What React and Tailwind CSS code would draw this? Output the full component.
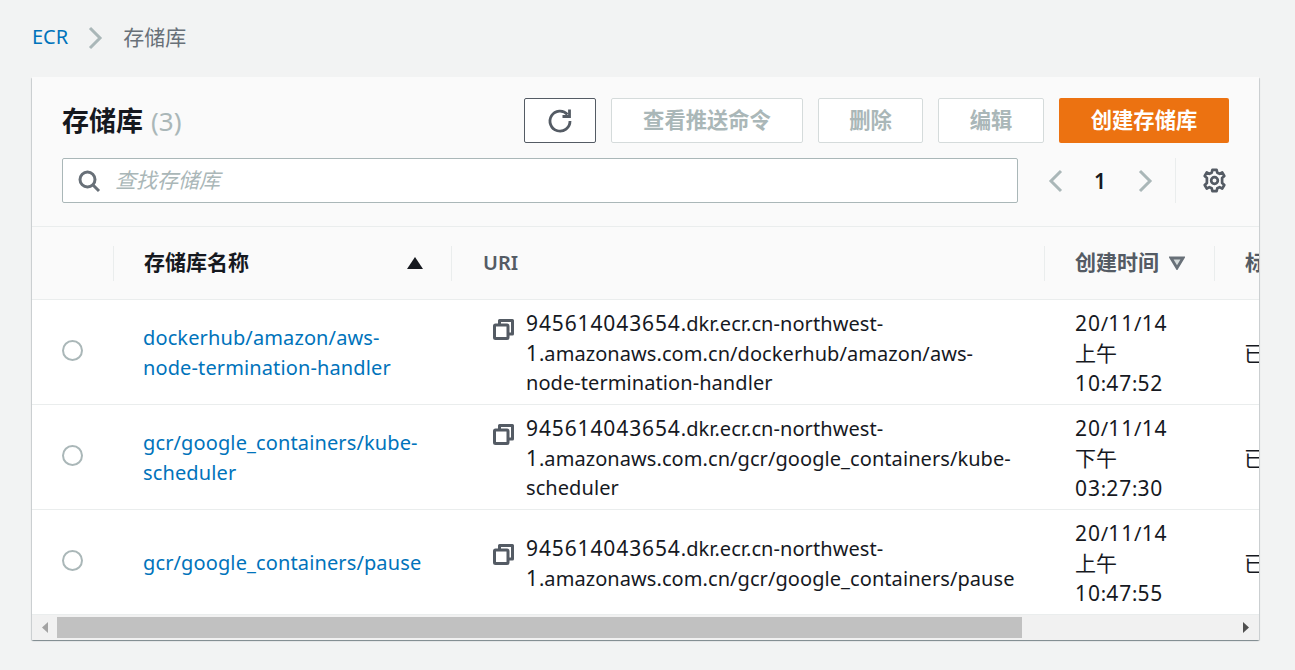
import React from "react";

const FONT = "font-['Noto_Sans','Noto_Sans_CJK_SC',sans-serif]";

const Refresh = () => (
  <svg width="26" height="26" viewBox="0 0 26 26" fill="none" stroke="#545b64" strokeWidth="2.8">
    <path d="M20.5 6.5 A10 10 0 1 0 23 13" />
    <path d="M22.5 1.5 V8.5 H15.5" />
  </svg>
);

const Search = () => (
  <svg width="24" height="24" viewBox="0 0 24 24" fill="none" stroke="#687078" strokeWidth="3">
    <circle cx="10.5" cy="10.5" r="7.5" />
    <path d="M16 16 L22 22" />
  </svg>
);

const Chevron = ({ dir, color = "#aab7b8", w = 16, h = 24 }) => (
  <svg width={w} height={h} viewBox="0 0 16 24" fill="none" stroke={color} strokeWidth="3">
    {dir === "left" ? <path d="M13 2 L3 12 L13 22" /> : <path d="M3 2 L13 12 L3 22" />}
  </svg>
);

const Gear = () => (
  <svg width="25" height="25" viewBox="0 0 24 24" fill="none" stroke="#545b64" strokeWidth="2.6" strokeLinejoin="round">
    <circle cx="12" cy="12" r="3.2" />
    <path d="M10 1.8 H14 L14.7 4.6 L16.9 5.6 L19.4 4.2 L21.4 7.7 L19.3 9.6 V14.4 L21.4 16.3 L19.4 19.8 L16.9 18.4 L14.7 19.4 L14 22.2 H10 L9.3 19.4 L7.1 18.4 L4.6 19.8 L2.6 16.3 L4.7 14.4 V9.6 L2.6 7.7 L4.6 4.2 L7.1 5.6 L9.3 4.6 Z" />
  </svg>
);

const Copy = () => (
  <svg width="21" height="21" viewBox="0 0 21 21" fill="none" stroke="#545b64" strokeWidth="3" strokeLinejoin="round">
    <rect x="1.5" y="6" width="13.5" height="13.5" rx="1" />
    <path d="M6.5 6 V1.5 H19.5 V15 H15" />
  </svg>
);

const rows = [
  {
    name: ["dockerhub/amazon/aws-", "node-termination-handler"],
    uri: ["945614043654.dkr.ecr.cn-northwest-", "1.amazonaws.com.cn/dockerhub/amazon/aws-", "node-termination-handler"],
    time: ["20/11/14", "上午", "10:47:52"],
  },
  {
    name: ["gcr/google_containers/kube-", "scheduler"],
    uri: ["945614043654.dkr.ecr.cn-northwest-", "1.amazonaws.com.cn/gcr/google_containers/kube-", "scheduler"],
    time: ["20/11/14", "下午", "03:27:30"],
  },
  {
    name: ["gcr/google_containers/pause"],
    uri: ["945614043654.dkr.ecr.cn-northwest-", "1.amazonaws.com.cn/gcr/google_containers/pause"],
    time: ["20/11/14", "上午", "10:47:55"],
  },
];

const DisabledBtn = ({ w, children }) => (
  <div className={`${w} h-[45px] flex items-center justify-center rounded-[2px] border border-[#d5dbdb] bg-white pb-[2px] text-[21.3px] font-bold text-[#aab7b8]`}>
    {children}
  </div>
);

// The reference's digits and CJK glyphs run a little wider than Noto Sans at the Latin size.
const Run = ({ text }) =>
  text.split(/(\d+|[\u4e00-\u9fff]+)/).map((part, i) =>
    i % 2 === 1 ? (
      <span key={i} className={/\d/.test(part) ? "text-[21px] tracking-[0.88px]" : "text-[21px]"}>{part}</span>
    ) : (
      part
    )
  );

const Lines = ({ items, tracking = "tracking-[0.07px]" }) =>
  items.map((l) => (
    <div key={l} className={`h-[30px] whitespace-nowrap ${tracking}`}><Run text={l} /></div>
  ));

export default function App() {
  return (
    <div className={`${FONT} w-[1295px] h-[670px] overflow-hidden bg-[#f2f3f3] pl-[32px] pt-[23px] text-[20px] leading-[30px] text-[#16191f]`}>
      <div className="mb-[24px] flex h-[30px] items-center">
        <span className="pb-[2px] text-[#0073bb]">ECR</span>
        <span className="ml-[19px] mr-[20px] flex"><Chevron dir="right" /></span>
        <span className="pb-[2px] text-[21px] text-[#687078]">存储库</span>
      </div>

      <div className="h-[563px] w-[1227px] overflow-hidden rounded-[1px] bg-white shadow-[0_1px_1px_0_rgba(0,28,36,0.3),1px_1px_1px_0_rgba(0,28,36,0.15),-1px_1px_1px_0_rgba(0,28,36,0.15)]">
        <div className="h-[150px] border-b border-[#eaeded] bg-[#fafafa] pl-[30px] pr-[30px] pt-[21px]">
          <div className="flex h-[45px] items-center justify-between">
            <div className="flex items-center text-[27px] font-bold">
              存储库
              <span className="ml-[8px] text-[26px] font-normal text-[#aab7b8]">(3)</span>
            </div>
            <div className="flex gap-[15px]">
              <div className="flex h-[45px] w-[72px] items-center justify-center rounded-[2px] border border-[#545b64] bg-white"><Refresh /></div>
              <DisabledBtn w="w-[192px]">查看推送命令</DisabledBtn>
              <DisabledBtn w="w-[105px]">删除</DisabledBtn>
              <DisabledBtn w="w-[106px]">编辑</DisabledBtn>
              <div className="flex h-[45px] w-[170px] items-center justify-center rounded-[2px] bg-[#ec7211] pb-[2px] text-[21.3px] font-bold text-white">创建存储库</div>
            </div>
          </div>
          <div className="mt-[15px] flex h-[45px]">
            <div className="flex h-[45px] w-[956px] items-center rounded-[2px] border border-[#aab7b8] bg-white pl-[14px]">
              <Search />
              <span className="ml-[14px] pb-[2px] text-[21px] italic text-[#aab7b8]">查找存储库</span>
            </div>
            <div className="ml-[30px] flex h-[45px] items-center">
              <Chevron dir="left" />
              <span className="ml-[30px] w-[12px] text-center text-[21px] font-semibold">1</span>
              <span className="ml-[31px] flex"><Chevron dir="right" /></span>
              <div className="ml-[22px] h-[45px] w-px bg-[#eaeded]" />
              <span className="ml-[26px] flex"><Gear /></span>
            </div>
          </div>
        </div>

        <div className="flex h-[73px] items-center overflow-hidden border-b border-[#eaeded] bg-[#fafafa] font-semibold">
          <div className="h-[35px] w-[82px] shrink-0 border-r border-[#eaeded]" />
          <div className="flex h-[35px] w-[338px] shrink-0 items-center justify-between border-r border-[#eaeded] pl-[30px] pr-[28px]">
            <span className="pb-[2px] text-[21px]">存储库名称</span>
            <svg width="16" height="14" viewBox="0 0 16 14" fill="#16191f"><path d="M8 1 L16 13 H0 Z" /></svg>
          </div>
          <div className="flex h-[35px] w-[593px] shrink-0 items-center border-r border-[#eaeded] pl-[31px] text-[#545b64]">URI</div>
          <div className="flex h-[35px] w-[170px] shrink-0 items-center border-r border-[#eaeded] pl-[30px] text-[21px] text-[#545b64]">
            <span className="pb-[2px]">创建时间</span>
            <svg className="ml-[10px]" width="16" height="14" viewBox="0 0 16 14" fill="#d5dbdb" stroke="#687078" strokeWidth="2.8"><path d="M2 2 H14 L8 12 Z" /></svg>
          </div>
          <div className="w-[44px] shrink-0 overflow-hidden whitespace-nowrap pb-[2px] pl-[30px] text-[21px] text-[#545b64]">标签</div>
        </div>

        {rows.map((r, i) => (
          <div key={i} className="flex h-[105px] items-center overflow-hidden border-b border-[#eaeded] bg-white pt-[2px]">
            <div className="mb-[6px] w-[81px] shrink-0 pl-[30px]">
              <div className="size-[21px] rounded-full border-2 border-[#aab7b8] bg-white" />
            </div>
            <div className="w-[338px] shrink-0 pl-[30px] text-[#0073bb]"><Lines items={r.name} tracking="tracking-[0.12px]" /></div>
            <div className="flex w-[593px] shrink-0 pl-[42px]">
              <span className="mr-[12px] mt-[11px] block h-[21px]"><Copy /></span>
              <div><Lines items={r.uri} /></div>
            </div>
            <div className="w-[170px] shrink-0 pl-[31px]"><Lines items={r.time} /></div>
            <div className="w-[45px] shrink-0 overflow-hidden whitespace-nowrap pl-[30px] text-[21px]">已</div>
          </div>
        ))}

        <div className="flex h-[25px] items-center bg-[#f1f1f1]">
          <div className="flex w-[25px] shrink-0 justify-center">
            <svg width="6" height="11" viewBox="0 0 6 11" fill="#a3a3a3"><path d="M6 0 V11 L0 5.5 Z" /></svg>
          </div>
          <div className="h-[21px] w-[965px] shrink-0 bg-[#c1c1c1]" />
          <div className="flex-1" />
          <div className="flex w-[27px] shrink-0 justify-center">
            <svg width="6" height="11" viewBox="0 0 6 11" fill="#505050"><path d="M0 0 V11 L6 5.5 Z" /></svg>
          </div>
        </div>
      </div>
    </div>
  );
}
